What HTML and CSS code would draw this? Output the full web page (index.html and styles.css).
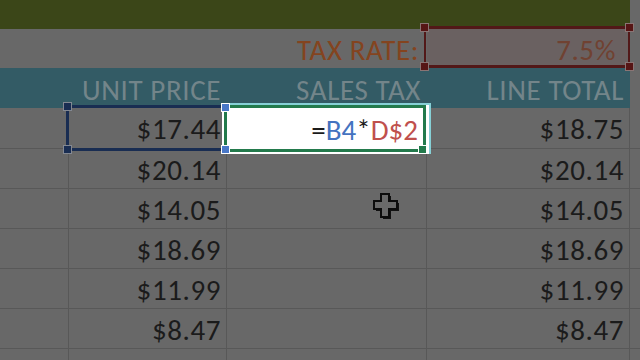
FILE: index.html
```html
<!DOCTYPE html>
<html>
<head>
<meta charset="utf-8">
<link rel="stylesheet" href="styles.css">
</head>
<body>
<div class="sheet">
  <div class="cell title"></div>
  <div class="cell edge"></div>

  <div class="cell plain"></div>
  <div class="cell plain label">TAX RATE:</div>
  <div class="cell rate">7.5%</div>
  <div class="cell edge"></div>

  <div class="cell head"></div>
  <div class="cell head">UNIT PRICE</div>
  <div class="cell head">SALES TAX</div>
  <div class="cell head">LINE TOTAL</div>
  <div class="cell edge"></div>

  <div class="cell g"></div><div class="cell g num">$17.44</div><div class="cell g"></div><div class="cell g num">$18.75</div><div class="cell g e"></div>
  <div class="cell g"></div><div class="cell g num">$20.14</div><div class="cell g"></div><div class="cell g num">$20.14</div><div class="cell g e"></div>
  <div class="cell g"></div><div class="cell g num">$14.05</div><div class="cell g"></div><div class="cell g num">$14.05</div><div class="cell g e"></div>
  <div class="cell g"></div><div class="cell g num">$18.69</div><div class="cell g"></div><div class="cell g num">$18.69</div><div class="cell g e"></div>
  <div class="cell g"></div><div class="cell g num">$11.99</div><div class="cell g"></div><div class="cell g num">$11.99</div><div class="cell g e"></div>
  <div class="cell g"></div><div class="cell g num">$8.47</div><div class="cell g"></div><div class="cell g num">$8.47</div><div class="cell g e"></div>
  <div class="cell g"></div><div class="cell g num">$</div><div class="cell g"></div><div class="cell g num">$</div><div class="cell g e"></div>

  <div class="rate-box">
    <span class="h h-tl"></span><span class="h h-tr"></span><span class="h h-bl"></span><span class="h h-br"></span>
  </div>

  <div class="ref-box">
    <span class="bh bh-tl"></span><span class="bh bh-bl"></span>
  </div>

  <div class="spot">
    <div class="active"><span class="eq">=</span><span class="rb">B4</span><span class="eq">*</span><span class="rr">D$2</span></div>
    <span class="lh lh-tl"></span><span class="lh lh-bl"></span>
    <span class="fill-handle"></span>
  </div>

  <svg class="cursor" width="30" height="30" viewBox="0 0 30 30">
    <path d="M10 3 h8 v7 h8 v8 h-8 v8 h-8 v-8 h-7 v-8 h7 z" fill="#111"/>
    <path d="M8 1 h8 v7 h8 v8 h-8 v8 h-8 v-8 h-7 v-8 h7 z" fill="#6a6a6a" stroke="#0c0c0c" stroke-width="2" stroke-linejoin="miter"/>
  </svg>
</div>
</body>
</html>
```

FILE: styles.css
```css
html, body {
  margin: 0;
  padding: 0;
  background: #686868;
}

.sheet {
  position: relative;
  width: 640px;
  height: 360px;
  overflow: hidden;
  display: grid;
  grid-template-columns: 69px 158px 200px 203px 10px;
  grid-template-rows: 29px 39px 40px 41px repeat(6, 40px);
  font-family: Carlito, Lato, "Open Sans", sans-serif;
  font-size: 29px;
  letter-spacing: 0.6px;
  color: #1b1b1b;
  background: #686868;
}

.cell {
  box-sizing: border-box;
  display: flex;
  align-items: center;
  justify-content: flex-end;
  padding-right: 6px;
  white-space: nowrap;
}

.title {
  grid-column: 1 / 5;
  background: #3b4618;
}

.edge {
  background: #686868;
}

.plain {
  background: #686868;
}

.label {
  grid-column: 2 / 4;
  color: #84441f;
  padding-right: 8px;
  padding-top: 2px;
}

.rate {
  background: #6a6161;
  color: #704232;
  padding-right: 14px;
  padding-top: 2px;
}

.head {
  background: #335b65;
  color: #73858a;
  padding-top: 4px;
}

.g {
  border-right: 1px solid #585858;
  border-bottom: 1px solid #585858;
}

.g.e {
  border-right: none;
}

.num {
  padding-top: 2px;
  padding-right: 5px;
}

/* Tax-rate reference box (D2) */
.rate-box {
  position: absolute;
  left: 424px;
  top: 26px;
  width: 206px;
  height: 42px;
  box-sizing: border-box;
  border-top: 3px solid #521818;
  border-bottom: 3px solid #521818;
  border-left: 2px solid #521818;
  border-right: 2px solid #521818;
}

.h {
  position: absolute;
  width: 7px;
  height: 7px;
  background: #561515;
  border: 1px solid #8a7474;
}
.h-tl { left: -6px; top: -6px; }
.h-tr { right: -6px; top: -6px; }
.h-bl { left: -6px; bottom: -6px; }
.h-br { right: -6px; bottom: -6px; }

/* B4 reference box */
.ref-box {
  position: absolute;
  left: 66px;
  top: 105px;
  width: 162px;
  height: 46px;
  box-sizing: border-box;
  border: 3px solid #192d52;
}

.bh {
  position: absolute;
  width: 7px;
  height: 7px;
  background: #192d52;
  border: 1px solid #838892;
}
.bh-tl { left: -6px; top: -6px; }
.bh-bl { left: -6px; bottom: -6px; }

/* Active cell spotlight */
.spot {
  position: absolute;
  left: 222px;
  top: 103px;
  width: 209px;
  height: 51px;
  box-sizing: border-box;
  background: #ffffff;
  border-top: 2px solid #86d0d6;
  border-right: 2px solid #86d0d6;
}

.active {
  position: absolute;
  left: 2px;
  top: 0px;
  width: 202px;
  height: 47px;
  box-sizing: border-box;
  border: 3px solid #237a4c;
  display: flex;
  align-items: center;
  justify-content: flex-end;
  padding-right: 5px;
  padding-top: 2px;
  white-space: nowrap;
  letter-spacing: 0;
}

.eq { color: #1b1b1b; }
.rb { color: #4473c0; }
.rr { color: #c0504d; }

.lh {
  position: absolute;
  width: 7px;
  height: 7px;
  background: #4a78c8;
  border: 1px solid #ffffff;
}
.lh-tl { left: -1px; top: -2px; }
.lh-bl { left: -1px; bottom: 0px; }

.fill-handle {
  position: absolute;
  right: 2px;
  bottom: 0px;
  width: 7px;
  height: 7px;
  background: #237a4c;
  border: 1px solid #ffffff;
}

.cursor {
  position: absolute;
  left: 373px;
  top: 193px;
}
```
